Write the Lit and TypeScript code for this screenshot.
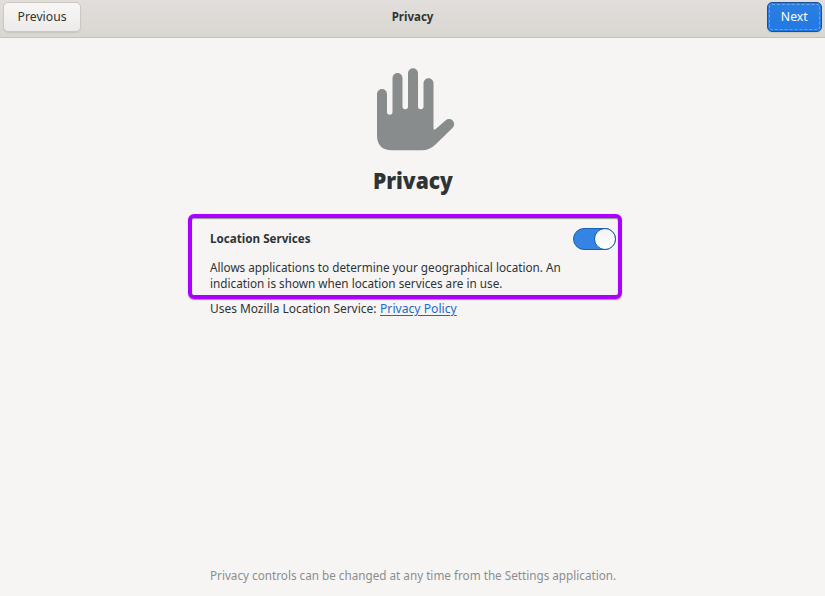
import { LitElement, html, css } from "lit";
import { customElement, property } from "lit/decorators.js";

@customElement("toggle-switch")
class ToggleSwitch extends LitElement {
  @property({ type: Boolean, reflect: true }) on = false;
  static styles = css`
    :host { display: block; }
    .track {
      box-sizing: border-box; width: 43px; height: 22px; display: flex;
      border: 1px solid #185fb4; border-radius: 11px; background: #3584e4;
      justify-content: flex-end;
    }
    .knob {
      box-sizing: border-box; width: 22px; height: 22px; margin: -1px -1px 0 0;
      border: 1px solid #185fb4; border-radius: 50%;
      background: linear-gradient(#f4f3f2, #fff);
    }
  `;
  render() {
    return html`<div class="track" role="switch" aria-checked=${this.on}><div class="knob"></div></div>`;
  }
}

@customElement("app-root")
class AppRoot extends LitElement {
  static styles = css`
    :host {
      display: flex; flex-direction: column; height: 596px; overflow: hidden;
      background: #f6f5f4; color: #2e3436;
      font: 13px/16px "Noto Sans", sans-serif; white-space: nowrap;
    }
    .bar {
      box-sizing: border-box; height: 38px; flex: none; padding: 2px 3px 5px 3px;
      display: grid; grid-template-columns: 1fr auto 1fr; align-items: center;
      background: linear-gradient(#e1dedb, #dad6d2); border-bottom: 1px solid #c8c2bc;
    }
    .btn {
      box-sizing: border-box; height: 30px; border: 1px solid #cdc7c2; border-radius: 5px;
      background: linear-gradient(#f8f7f6, #edebe9); display: flex; align-items: center;
      justify-content: center; box-shadow: 0 1px 1px rgba(0,0,0,.08); padding-bottom: 2px;
    }
    .fit { display: inline-block; transform: scaleX(.9); transform-origin: 0 50%; }
    .btn .fit { transform: scaleX(.94); transform-origin: 50% 50%; }
    .prev { width: 78px; }
    .next {
      width: 55px; justify-self: end; color: #fff; border-color: #15539e;
      background: linear-gradient(#2b7ee3, #2379e2); position: relative;
    }
    .next::after { content: ""; position: absolute; inset: 1px; border: 1px dashed rgba(255,255,255,.3); border-radius: 3px; }
    .title { font-weight: 700; padding-bottom: 2px; }
    .title .fit { transform: scaleX(.885); transform-origin: 50% 50%; }
    .page { flex: 1; display: flex; flex-direction: column; align-items: center; }
    .hand { display: block; width: 78px; height: 83px; margin: 30px 0 0 6px; fill: #888c8c; }
    h1 { font-size: 22px; line-height: 30px; font-weight: 900; margin: 14px 0 0; }
    h1 .fit { transform: scaleX(.955); transform-origin: 50% 50%; }
    .frame {
      box-sizing: border-box; width: 434px; height: 85px; margin: 19px 16px 0 0;
      border: 4px solid #aa00ff; border-radius: 6px; padding: 10px 2px 0 17px;
      box-shadow: 0 1px 1px rgba(0,0,0,.4), inset 0 1px 1px rgba(0,0,0,.4);
    }
    .row { display: flex; justify-content: space-between; align-items: center; height: 22px; }
    .name { font-weight: 700; margin: -2px 0 0 1px; transform: scaleX(.895); }
    .desc { margin: 9px 0 0 1px; }
    .line { display: block; width: max-content; transform: scaleX(.902); }
    .source { width: 406px; margin: 1px 0 0; display: flex; }
    .uses { width: 170px; }
    .uses .fit { transform: scaleX(.917); }
    a.fit { color: #1b6acb; text-decoration: underline; text-underline-offset: 2px; transform: scaleX(.936); }
    .note { width: 406px; margin: auto 0 13px; color: #8b8e8f; }
  `;
  render() {
    return html`
      <header class="bar">
        <div class="btn prev"><span class="fit">Previous</span></div>
        <div class="title"><span class="fit">Privacy</span></div>
        <div class="btn next"><span class="fit">Next</span></div>
      </header>
      <main class="page">
        <svg class="hand" viewBox="0 0 78 83">
          <path d="M0 26a5 5 0 0 1 10 0V44a2.75 2.75 0 0 0 5.5 0V10a5 5 0 0 1 10 0V38.5a2.75 2.75 0 0 0 5.5 0V5.2a5 5 0 0 1 10 0V38.5a2.75 2.75 0 0 0 5.5 0V15.3a5 5 0 0 1 10 0V60q0 3 2.2 1L68.500 52.500a5 5 0 0 1 7.2 7.2L58.500 76.500Q52.500 82.300 45 82.300H15Q0 82.300 0 67Z"/>
        </svg>
        <h1><span class="fit">Privacy</span></h1>
        <section class="frame">
          <div class="row"><span class="name fit">Location Services</span><toggle-switch on></toggle-switch></div>
          <div class="desc">
            <span class="line fit">Allows applications to determine your geographical location. An</span>
            <span class="line fit">indication is shown when location services are in use.</span>
          </div>
        </section>
        <div class="source">
          <span class="uses"><span class="fit">Uses Mozilla Location Service:</span></span>
          <a class="fit">Privacy Policy</a>
        </div>
        <div class="note"><span class="fit">Privacy controls can be changed at any time from the Settings application.</span></div>
      </main>
    `;
  }
}
